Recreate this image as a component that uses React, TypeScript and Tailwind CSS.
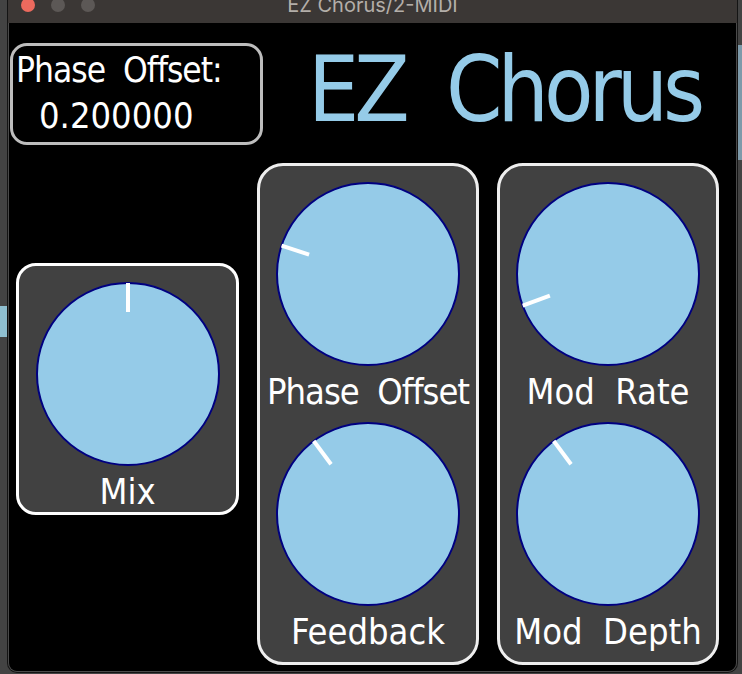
import React from "react";

const FONT =
  "font-['DejaVu_Sans_Condensed','DejaVu_Sans',sans-serif] font-stretch-semi-condensed";

function Knob({ angle }: { angle: number }) {
  const rad = (angle * Math.PI) / 180;
  const c = 93;
  const x1 = c + 62 * Math.sin(rad);
  const y1 = c - 62 * Math.cos(rad);
  const x2 = c + 91 * Math.sin(rad);
  const y2 = c - 91 * Math.cos(rad);
  return (
    <svg width={186} height={186} viewBox="0 0 186 186" className="block shrink-0">
      <circle cx={c} cy={c} r={91} fill="#95cbe8" stroke="#000080" strokeWidth={2} />
      <line x1={x1} y1={y1} x2={x2} y2={y2} stroke="#ffffff" strokeWidth={4} />
    </svg>
  );
}

function Unit({
  angle,
  label,
  className = "",
  labelClass = "",
}: {
  angle: number;
  label: string;
  className?: string;
  labelClass?: string;
}) {
  return (
    <div className={`flex flex-col items-center ${className}`}>
      <Knob angle={angle} />
      <div className={`${FONT} mt-[7px] text-[36px] leading-[36px] text-white whitespace-pre ${labelClass}`}>
        {label}
      </div>
    </div>
  );
}

function TitleBar() {
  return (
    <div className="relative h-[23px] shrink-0 bg-[#3b3735] overflow-hidden flex items-start">
      <div className="flex gap-[16px] pl-[13px] -mt-[2px]">
        <div className="w-[14px] h-[14px] rounded-full bg-[#ec6a5e]" />
        <div className="w-[14px] h-[14px] rounded-full bg-[#5c5856]" />
        <div className="w-[14px] h-[14px] rounded-full bg-[#5c5856]" />
      </div>
      <div className="absolute inset-x-0 top-0 flex justify-center">
        <span className="-mt-[5px] font-['Inter',sans-serif] text-[20px] leading-[20px] text-[#b3aea9]">
          EZ Chorus/2-MIDI
        </span>
      </div>
    </div>
  );
}

export default function App() {
  return (
    <div className="w-[742px] h-[674px] bg-[#434343] flex overflow-hidden">
      <div className="w-[7px] shrink-0 flex flex-col">
        <div className="h-[306px]" />
        <div className="h-[31px] bg-[#8fbfd0]" />
      </div>
      <div className="w-[731px] h-[673px] shrink-0 border border-t-0 border-[#141414] rounded-b-[10px] overflow-hidden flex flex-col">
        <TitleBar />
        <div className="flex-1 bg-black border border-t-0 border-[#4a4a4a] rounded-b-[9px] flex flex-col pt-[20px] pl-[1px]">
          <div className="flex items-start h-[102px]">
            <div className="w-[253px] h-[102px] shrink-0 border-[3px] border-[#bdbdbd] rounded-[17px] flex flex-col">
              <div
                className={`${FONT} pl-[3px] pt-[6px] text-[35px] leading-[36px] tracking-[-1px] text-white whitespace-pre`}
              >
                Phase  Offset:
              </div>
              <div className={`${FONT} pl-[26px] mt-[10px] text-[36px] leading-[36px] text-white`}>
                0.200000
              </div>
            </div>
            <div
              className={`${FONT} ml-[45px] mt-[2px] text-[90px] leading-[90px] tracking-[-5px] text-[#95cbe8] whitespace-pre`}
            >
              EZ  Chorus
            </div>
          </div>
          <div className="mt-[18px] flex items-start gap-[18px] pl-[6px]">
            <div className="mt-[100px] w-[223px] h-[252px] shrink-0 border-[3px] border-white rounded-[20px] bg-[#414141] flex flex-col items-center pt-[15px]">
              <Unit angle={0} label="Mix" />
            </div>
            <div className="w-[222px] h-[502px] shrink-0 border-[3px] border-[#eeeeee] rounded-[26px] bg-[#414141] flex flex-col items-center pt-[15px]">
              <Unit angle={-71.8} label="Phase  Offset" labelClass="tracking-[-1px]" />
              <Unit angle={-36.6} label="Feedback" className="mt-[11px]" />
            </div>
            <div className="w-[222px] h-[502px] shrink-0 border-[3px] border-[#eeeeee] rounded-[26px] bg-[#414141] flex flex-col items-center pt-[15px]">
              <Unit angle={-110.4} label="Mod  Rate" />
              <Unit angle={-36.6} label="Mod  Depth" className="mt-[11px]" />
            </div>
          </div>
        </div>
      </div>
      <div className="flex-1 flex flex-col">
        <div className="h-[45px]" />
        <div className="h-[115px] bg-[#7d9aaa]" />
      </div>
    </div>
  );
}
